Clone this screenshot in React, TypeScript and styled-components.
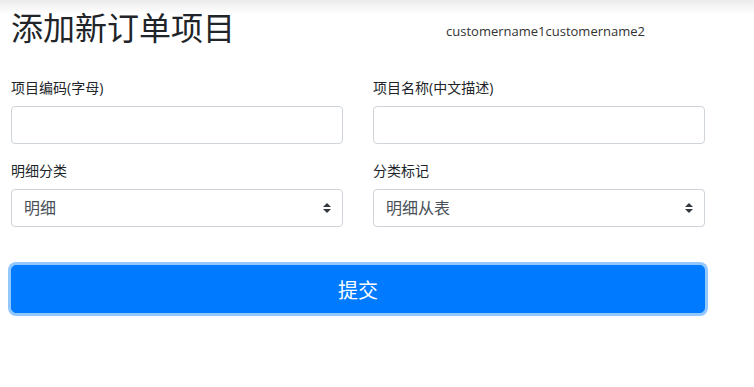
import React from 'react';
import styled, { createGlobalStyle } from 'styled-components';

const GlobalStyle = createGlobalStyle`
  html, body {
    margin: 0;
    padding: 0;
    background: #fff;
  }
  body {
    font-family: "Open Sans", "Noto Sans CJK SC", sans-serif;
    color: #212529;
  }
  * {
    box-sizing: border-box;
  }
`;

const Page = styled.div`
  width: 754px;
  min-height: 387px;
  padding: 6px 11px 0;
  background: linear-gradient(#ebebeb 0, #ffffff 14px);
`;

const Header = styled.div`
  display: flex;
  align-items: center;
  height: 44px;
`;

const Title = styled.h2`
  margin: 0;
  font-size: 32px;
  font-weight: 400;
  line-height: 38px;
  color: #212529;
`;

const Customers = styled.div`
  margin-left: auto;
  margin-right: 98px;
  padding-top: 6px;
  font-size: 13px;
  color: #333;
`;

const Form = styled.form`
  margin-top: 27px;
  width: 694px;
`;

const Row = styled.div`
  display: grid;
  grid-template-columns: 332px 332px;
  column-gap: 30px;
  margin-bottom: 16px;
`;

const Group = styled.div`
  display: flex;
  flex-direction: column;
`;

const Label = styled.label`
  font-size: 14px;
  line-height: 21px;
  margin-bottom: 8px;
  color: #212529;
`;

const Input = styled.input`
  height: 38px;
  padding: 6px 12px;
  font-size: 16px;
  color: #495057;
  border: 1px solid #ced4da;
  border-radius: 4px;
  background: #fff;
  outline: none;
`;

const SelectWrap = styled.div`
  position: relative;
`;

const Select = styled.select`
  width: 100%;
  height: 38px;
  padding: 6px 28px 6px 12px;
  font-family: inherit;
  font-size: 16px;
  color: #495057;
  border: 1px solid #ced4da;
  border-radius: 4px;
  background: #fff;
  appearance: none;
  outline: none;
`;

const Caret = styled.svg`
  position: absolute;
  right: 12px;
  top: 14px;
  width: 8px;
  height: 10px;
  pointer-events: none;
`;

const Submit = styled.button`
  display: block;
  width: 694px;
  height: 48px;
  margin-top: 38px;
  font-family: inherit;
  font-size: 20px;
  color: #fff;
  background: #007bff;
  border: 1px solid #007bff;
  border-radius: 5px;
  box-shadow: 0 0 0 3px rgba(38, 143, 255, 0.5);
  cursor: pointer;
`;

const Dropdown: React.FC<{ options: string[] }> = ({ options }) => (
  <SelectWrap>
    <Select defaultValue={options[0]}>
      {options.map((o) => (
        <option key={o}>{o}</option>
      ))}
    </Select>
    <Caret viewBox="0 0 4 5">
      <path fill="#343a40" d="M2 0L0 2h4zm0 5L0 3h4z" />
    </Caret>
  </SelectWrap>
);

const App: React.FC = () => {
  return (
    <>
      <GlobalStyle />
      <Page>
        <Header>
          <Title>添加新订单项目</Title>
          <Customers>customername1customername2</Customers>
        </Header>
        <Form onSubmit={(e) => e.preventDefault()}>
          <Row>
            <Group>
              <Label>项目编码(字母)</Label>
              <Input type="text" />
            </Group>
            <Group>
              <Label>项目名称(中文描述)</Label>
              <Input type="text" />
            </Group>
          </Row>
          <Row>
            <Group>
              <Label>明细分类</Label>
              <Dropdown options={['明细', '汇总']} />
            </Group>
            <Group>
              <Label>分类标记</Label>
              <Dropdown options={['明细从表', '主表']} />
            </Group>
          </Row>
          <Submit type="submit">提交</Submit>
        </Form>
      </Page>
    </>
  );
};

export default App;
